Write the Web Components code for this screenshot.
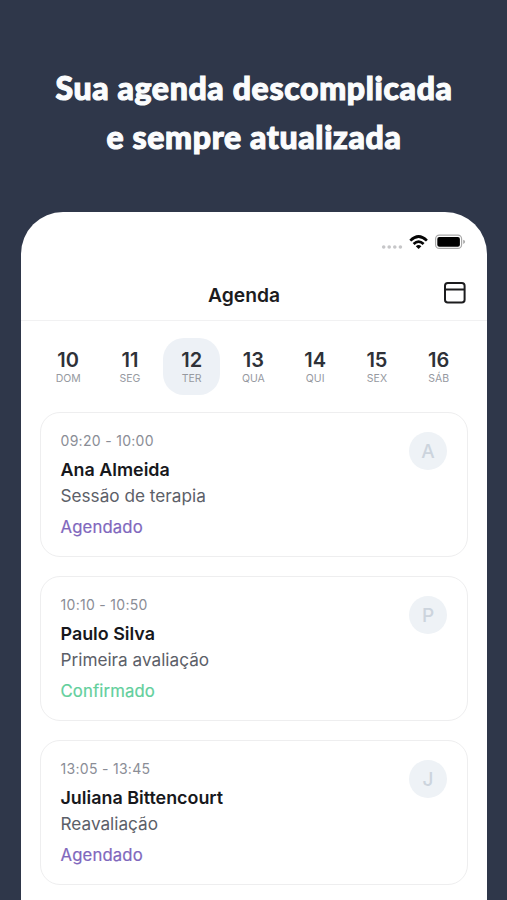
<!DOCTYPE html>
<html lang="pt-BR">
<head>
<meta charset="utf-8">
<title>Agenda</title>
<style>
html,body{margin:0;height:900px;overflow:hidden;background:#2f374a}
body{font-family:Inter,"Liberation Sans",sans-serif}
</style>
</head>
<body>
<promo-screen>
  <promo-title slot="title"><span>Sua agenda descomplicada</span><span>e sempre atualizada</span></promo-title>
  <phone-frame>
    <status-bar></status-bar>
    <nav-bar>Agenda</nav-bar>
    <week-strip>
      <day-cell day="10">DOM</day-cell>
      <day-cell day="11">SEG</day-cell>
      <day-cell day="12" selected>TER</day-cell>
      <day-cell day="13">QUA</day-cell>
      <day-cell day="14">QUI</day-cell>
      <day-cell day="15">SEX</day-cell>
      <day-cell day="16">SÁB</day-cell>
    </week-strip>
    <appointment-list>
      <appointment-card time="09:20 - 10:00" name="Ana Almeida" status="Agendado" initial="A">Sessão de terapia</appointment-card>
      <appointment-card time="10:10 - 10:50" name="Paulo Silva" status="Confirmado" initial="P">Primeira avaliação</appointment-card>
      <appointment-card time="13:05 - 13:45" name="Juliana Bittencourt" status="Agendado" initial="J">Reavaliação</appointment-card>
    </appointment-list>
  </phone-frame>
</promo-screen>
<script>
function define(tag, render) {
  customElements.define(tag, class extends HTMLElement {
    connectedCallback() {
      if (this.shadowRoot) return;
      this.attachShadow({ mode: 'open' }).innerHTML = render(this);
    }
  });
}

define('promo-screen', () => `
<style>
:host{display:flex;flex-direction:column;width:507px;height:900px;overflow:hidden;background:#2f374a}
.rest{flex:1;min-height:0;padding:0 20px 0 21px}
</style>
<slot name="title"></slot><div class="rest"><slot></slot></div>`);

define('promo-title', () => `
<style>
:host{display:flex;flex:none;flex-direction:column;align-items:center;height:149px;padding:63px 0 0 1px;color:#fbfcfd;
 font:900 32px/49px Lato,"Open Sans",sans-serif;white-space:nowrap}
::slotted(span){letter-spacing:.65px;-webkit-text-stroke:1.1px #fbfcfd}
</style>
<slot></slot>`);

define('phone-frame', () => `
<style>
:host{display:flex;flex-direction:column;height:100%;background:#fff;border-radius:42px 42px 0 0}
</style>
<slot></slot>`);

define('status-bar', () => `
<style>
:host{display:flex;flex:none;justify-content:flex-end;height:58px;box-sizing:border-box;padding:20px 21px 0 0}
svg{display:block}
</style>
<svg width="86" height="20" viewBox="380 232 86 20">
 <g fill="#c6c6c8"><circle cx="383.7" cy="247" r="1.8"/><circle cx="389.2" cy="247" r="1.8"/><circle cx="394.8" cy="247" r="1.8"/><circle cx="400.4" cy="247" r="1.8"/></g>
 <g fill="none" stroke="#050505" stroke-width="2.7"><path d="M410.3 240.6Q418.6 232.5 426.9 240.6"/><path d="M413.6 244Q418.6 239.2 423.6 244"/></g>
 <path d="M415.8 246.2Q418.6 243.9 421.4 246.2L418.6 249Z" fill="#050505"/>
 <rect x="435.6" y="235.2" width="26" height="13.2" rx="3.7" fill="#fff" stroke="#a9a9a9" stroke-width="1.2"/>
 <rect x="437.3" y="236.9" width="22.6" height="9.8" rx="2" fill="#000"/>
 <path d="M463.2 239.7Q465.1 240.2 465.1 241.8T463.2 243.9Z" fill="#a9a9a9"/>
</svg>`);

define('nav-bar', () => `
<style>
:host{display:grid;flex:none;grid-template-columns:1fr auto 1fr;height:51px;box-sizing:border-box;border-bottom:1px solid #f1f1f2;
 font-weight:600;font-size:19.3px;line-height:50px;color:#1c1c1e}
.title{grid-column:2;margin-right:20px}
svg{justify-self:end;margin:10px 20px 0 0}
</style>
<span class="title"><slot></slot></span>
<svg width="24" height="24" viewBox="0 0 24 24" fill="none" stroke="#1c1c1e" stroke-width="2"><rect x="2" y="2.9" width="19.6" height="19.6" rx="2.8"/><path d="M2 9.5H21.6"/></svg>`);

define('week-strip', () => `
<style>
:host{display:grid;flex:none;grid-template-columns:repeat(7,57px);column-gap:4.75px;padding:17px 0 0 18.7px}
</style>
<slot></slot>`);

define('day-cell', el => `
<style>
:host{display:flex;flex-direction:column;align-items:center;height:57px;box-sizing:border-box;padding-top:10px;border-radius:21px}
:host([selected]){background:#edf1f6}
.n{font-weight:600;font-size:20px;line-height:24px;color:#2e3138}
.d{font-size:10.5px;line-height:13px;color:#96999f}
</style>
<span class="n">${el.getAttribute('day')}</span><span class="d"><slot></slot></span>`);

define('appointment-list', () => `
<style>
:host{display:flex;flex:none;flex-direction:column;gap:19.2px;padding:17px 19.5px 0 19px}
</style>
<slot></slot>`);

define('appointment-card', el => `
<style>
:host{display:flex;justify-content:space-between;height:145px;box-sizing:border-box;border:1.5px solid #eeeeef;border-radius:20px;padding:19px 19.5px 0 19.5px;white-space:nowrap}
.info{display:flex;flex-direction:column}
.time{font-size:14px;line-height:18px;letter-spacing:.3px;color:#8a8d96}
.name{font-weight:600;font-size:17.9px;line-height:26px;margin-top:7px;color:#17181c}
.kind{font-size:17.2px;line-height:26px;color:#5c6068}
.status{font-weight:400;font-size:16.7px;line-height:24px;letter-spacing:.15px;-webkit-text-stroke:.2px currentColor;margin-top:6px;color:${el.getAttribute('status') === 'Confirmado' ? '#62cf9c' : '#7f67bd'}}
.avatar{width:38px;height:38px;border-radius:50%;background:#eef2f6;color:#ccd4dd;font-weight:500;font-size:19px;line-height:39px;text-align:center}
</style>
<div class="info">
 <span class="time">${el.getAttribute('time')}</span>
 <span class="name">${el.getAttribute('name')}</span>
 <span class="kind"><slot></slot></span>
 <span class="status">${el.getAttribute('status')}</span>
</div>
<div class="avatar">${el.getAttribute('initial')}</div>`);
</script>
</body>
</html>
